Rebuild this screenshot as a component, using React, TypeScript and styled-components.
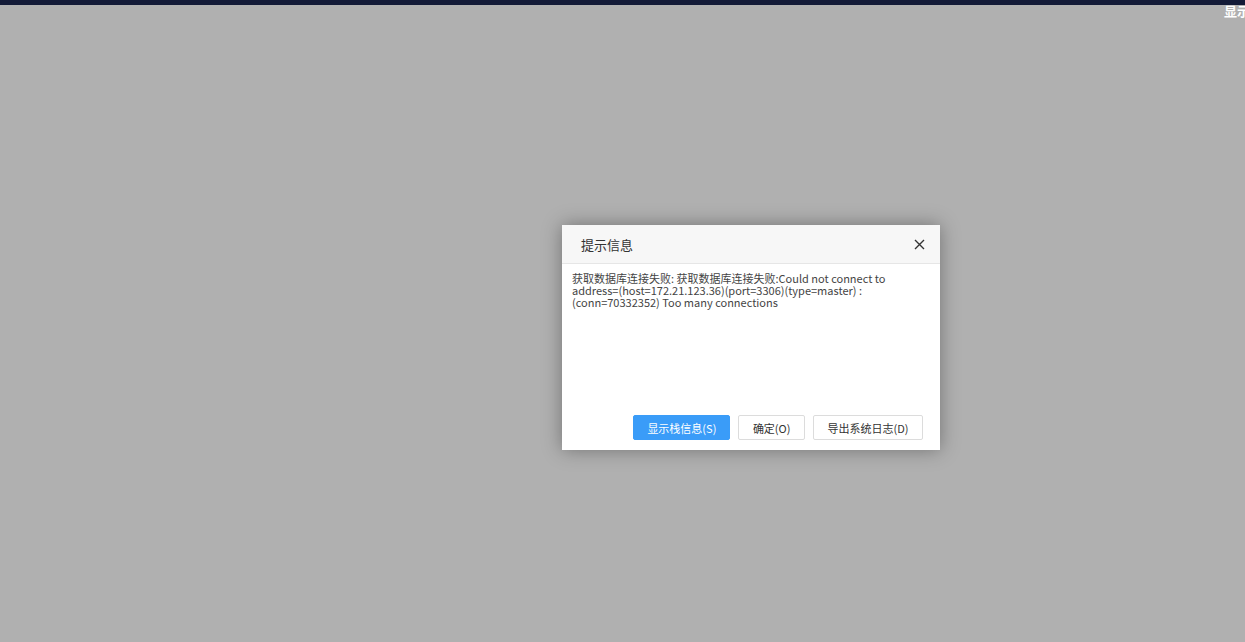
import styled, { createGlobalStyle } from "styled-components"

const GlobalStyle = createGlobalStyle`
  html, body {
    margin: 0;
    padding: 0;
    height: 100%;
  }
  body {
    font-family: "Noto Sans CJK SC", "Open Sans", sans-serif;
    background: #b0b0b0;
    overflow: hidden;
  }
`

const Page = styled.div`
  position: relative;
  width: 100vw;
  height: 100vh;
  background: #b0b0b0;
`

const TopBar = styled.div`
  height: 5px;
  background: #131a37;
`

const CornerLabel = styled.span`
  position: absolute;
  top: 1px;
  left: 1224px;
  color: #fff;
  font-size: 13px;
  font-weight: 700;
  white-space: nowrap;
`

const Dialog = styled.div`
  position: absolute;
  left: 562px;
  top: 225px;
  width: 378px;
  height: 225px;
  background: #fff;
  box-shadow: 0 0 18px rgba(0, 0, 0, 0.35);
  display: flex;
  flex-direction: column;
`

const Header = styled.div`
  height: 38px;
  display: flex;
  align-items: center;
  justify-content: space-between;
  padding: 0 14px 0 19px;
  background: #f7f7f7;
  border-bottom: 1px solid #e6e6e6;
`

const Title = styled.span`
  font-size: 13px;
  color: #333;
`

const CloseButton = styled.button`
  border: 0;
  background: none;
  padding: 0;
  width: 14px;
  height: 14px;
  display: flex;
  align-items: center;
  justify-content: center;
  cursor: pointer;
`

const Message = styled.div`
  flex: 1;
  padding: 8px 30px 0 10px;
  font-size: 11px;
  line-height: 12px;
  color: #444;
  word-break: break-word;
`

const Footer = styled.div`
  display: flex;
  justify-content: flex-end;
  gap: 8px;
  padding: 0 17px 10px 0;
`

const Button = styled.button<{ $primary?: boolean }>`
  height: 25px;
  padding: 0 ${(p) => (p.$primary ? "13px" : "13.5px")};
  font-family: "Noto Sans CJK SC", "Open Sans", sans-serif;
  font-size: 11px;
  border-radius: 2px;
  border: 1px solid ${(p) => (p.$primary ? "#3a9cf8" : "#dcdcdc")};
  background: ${(p) => (p.$primary ? "#3a9cf8" : "#fff")};
  color: ${(p) => (p.$primary ? "#fff" : "#333")};
  cursor: pointer;
`

const App = () => (
  <Page>
    <GlobalStyle />
    <TopBar />
    <CornerLabel>显示</CornerLabel>
    <Dialog>
      <Header>
        <Title>提示信息</Title>
        <CloseButton aria-label="close">
          <svg width="11" height="11" viewBox="0 0 11 11">
            <path d="M1 1L10 10M10 1L1 10" stroke="#333" strokeWidth="1.4" />
          </svg>
        </CloseButton>
      </Header>
      <Message>
        获取数据库连接失败: 获取数据库连接失败:Could not connect to
        address=(host=172.21.123.36)(port=3306)(type=master) :
        (conn=70332352) Too many connections
      </Message>
      <Footer>
        <Button $primary>显示栈信息(S)</Button>
        <Button>确定(O)</Button>
        <Button>导出系统日志(D)</Button>
      </Footer>
    </Dialog>
  </Page>
)

export default App
